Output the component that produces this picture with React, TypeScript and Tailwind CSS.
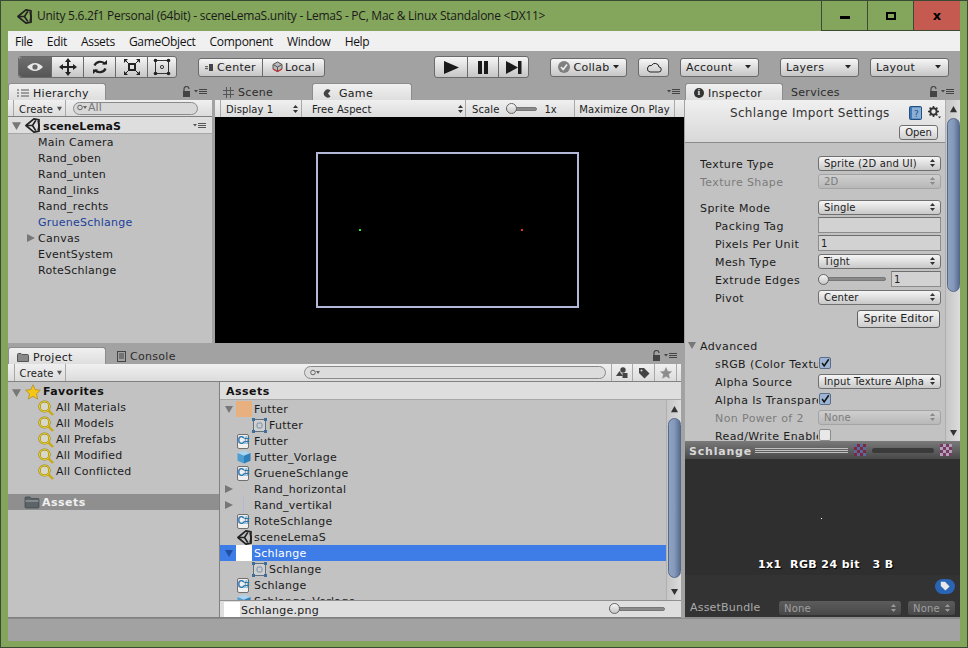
import type { ReactNode } from "react";

const hierarchyItems = ["Main Camera", "Rand_oben", "Rand_unten", "Rand_links", "Rand_rechts", "GrueneSchlange", "Canvas", "EventSystem", "RoteSchlange"];
const favorites = ["All Materials", "All Models", "All Prefabs", "All Modified", "All Conflicted"];

function UnityLogo({ size = 16, color = "#222" }: { size?: number; color?: string }) {
  return (
    <svg width={size} height={size} viewBox="0 0 16 16" className="shrink-0">
      <path d="M1 8 L9.5 1 L15 2 L14.6 6 L15 10 L15 14 L9.5 15 Z" fill="none" stroke={color} strokeWidth="1.8" strokeLinejoin="round" />
      <path d="M2 8 H8 M8 8 L11.5 2.5 M8 8 L11.5 13.5" stroke={color} strokeWidth="1.8" fill="none" />
      <path d="M14 3 L15.2 8 L14 13" stroke={color} strokeWidth="1.8" fill="none" />
    </svg>
  );
}

function Triangle({ dir = "down", color = "#777", size = 8 }: { dir?: "down" | "right" | "up"; color?: string; size?: number }) {
  const d = dir === "down" ? "M0 1 H8 L4 8 Z" : dir === "right" ? "M0 0 L8 4 L0 8 Z" : "M0 7 H8 L4 0 Z";
  return (
    <svg width={size} height={size} viewBox="0 0 8 8" className="shrink-0">
      <path d={d} fill={color} />
    </svg>
  );
}

function Lock() {
  return (
    <svg width="9" height="11" viewBox="0 0 9 11" className="shrink-0">
      <path d="M2 5 V3 a2.5 2.5 0 0 1 5 0" fill="none" stroke="#444" strokeWidth="1.2" />
      <rect x="1" y="5" width="7" height="6" fill="#444" />
    </svg>
  );
}

function PaneMenu({ light = false }: { light?: boolean }) {
  const c = light ? "#555" : "#444";
  return (
    <svg width="14" height="7" viewBox="0 0 14 7" className="shrink-0">
      <path d="M0 2 H4 L2 4.5 Z" fill={c} />
      <path d="M5 1.5 H13 M5 3.5 H13 M5 5.5 H13" stroke={c} strokeWidth="1" />
    </svg>
  );
}

function Updown({ color = "#333" }: { color?: string }) {
  return (
    <svg width="5" height="8" viewBox="0 0 5 8" className="shrink-0">
      <path d="M0 3 L2.5 0 L5 3 Z M0 5 H5 L2.5 8 Z" fill={color} />
    </svg>
  );
}

function Caret() {
  return (
    <svg width="6" height="4" viewBox="0 0 6 4" className="shrink-0">
      <path d="M0 0 H6 L3 3.5 Z" fill="#222" />
    </svg>
  );
}

function CsIcon() {
  return (
    <span className="ml-[1px] flex h-[15px] w-[12px] shrink-0 items-center justify-center rounded-[2px] border border-[#6f6f6f] bg-[#f0f0f0] font-['Liberation_Sans',sans-serif] text-[10px] font-bold leading-none tracking-[-1px] text-[#2a7ab0]">
      C#
    </span>
  );
}

function CubeIcon() {
  return (
    <svg width="14" height="14" viewBox="0 0 14 14" className="ml-[1px] shrink-0">
      <path d="M7 0.5 L13.5 3 L7 5.8 L0.5 3 Z" fill="#a8d4ee" />
      <path d="M0.5 3 L7 5.8 V13.5 L0.5 10.8 Z" fill="#4e9ed2" />
      <path d="M13.5 3 L7 5.8 V13.5 L13.5 10.8 Z" fill="#2f7fb8" />
    </svg>
  );
}

function SpriteIcon() {
  return (
    <svg width="15" height="15" viewBox="0 0 15 15" className="ml-[1px] shrink-0">
      <rect x="1.5" y="1.5" width="12" height="12" fill="#cfcfcf" stroke="#5f6f7f" />
      <rect x="5" y="5" width="5" height="5" rx="1.5" fill="none" stroke="#6c8ca8" />
      <rect x="0" y="0" width="3" height="3" fill="#3d6f9a" />
      <rect x="12" y="0" width="3" height="3" fill="#3d6f9a" />
      <rect x="0" y="12" width="3" height="3" fill="#3d6f9a" />
      <rect x="12" y="12" width="3" height="3" fill="#3d6f9a" />
    </svg>
  );
}

function SearchIcon() {
  return (
    <svg width="16" height="16" viewBox="0 0 16 16" className="shrink-0">
      <circle cx="6.5" cy="6.5" r="5" fill="#d8d8c8" stroke="#8a7a10" strokeWidth="2.2" />
      <circle cx="6.5" cy="6.5" r="5" fill="none" stroke="#f0d020" strokeWidth="1.1" />
      <path d="M10.5 10.5 L15 15" stroke="#c9a810" strokeWidth="2.4" />
    </svg>
  );
}

function Star({ color = "#f5c518", size = 16, stroke = "#a08010" }: { color?: string; size?: number; stroke?: string }) {
  return (
    <svg width={size} height={size} viewBox="0 0 16 16" className="shrink-0">
      <path d="M8 0.8 L10.2 5.6 L15.4 6.2 L11.5 9.7 L12.6 15 L8 12.3 L3.4 15 L4.5 9.7 L0.6 6.2 L5.8 5.6 Z" fill={color} stroke={stroke} strokeWidth="0.6" />
    </svg>
  );
}

function FolderIcon() {
  return (
    <svg width="16" height="13" viewBox="0 0 16 13" className="shrink-0">
      <path d="M1 2 Q1 1 2 1 H6 L7 2.5 H14 Q15 2.5 15 3.5 V11 Q15 12 14 12 H2 Q1 12 1 11 Z" fill="#5c6468" stroke="#3e4548" strokeWidth="0.7" />
      <path d="M1.5 5 H14.5" stroke="#aab0b2" strokeWidth="1" />
    </svg>
  );
}

function Checker({ c1, c2 }: { c1: string; c2: string }) {
  return (
    <svg width="12" height="12" viewBox="0 0 12 12" className="shrink-0">
      <rect width="12" height="12" fill={c1} />
      <path d="M0 0 H3 V3 H0 Z M6 0 H9 V3 H6 Z M3 3 H6 V6 H3 Z M9 3 H12 V6 H9 Z M0 6 H3 V9 H0 Z M6 6 H9 V9 H6 Z M3 9 H6 V12 H3 Z M9 9 H12 V12 H9 Z" fill={c2} />
    </svg>
  );
}

// nudges text down 1px inside a centred flex row, the hinted glyphs sit low in the original
function Low({ children }: { children: ReactNode }) {
  return <span className="whitespace-nowrap pt-[2px]">{children}</span>;
}

function Lower({ children }: { children: ReactNode }) {
  return <span className="whitespace-nowrap pt-[4px]">{children}</span>;
}

function ToolbarButton({ className = "", children }: { className?: string; children: ReactNode }) {
  return (
    <div className={`flex h-[19px] items-center rounded-[3px] border border-[#6a6a6a] bg-linear-to-b from-[#f6f6f6] to-[#c6c6c6] text-[11px] tracking-[0.3px] text-[#222] ${className}`}>
      {children}
    </div>
  );
}

function Segment({ w, active = false, children }: { w: string; active?: boolean; children: ReactNode }) {
  return (
    <div className={`flex h-full items-center justify-center border-l border-[#6a6a6a] first:border-l-0 ${w} ${active ? "rounded-l-[3px] bg-linear-to-b from-[#6e6e6e] to-[#565656]" : ""}`}>
      {children}
    </div>
  );
}

function Tab({ active = false, w, children }: { active?: boolean; w: string; children: ReactNode }) {
  return (
    <div className={`flex h-[17px] items-center gap-[4px] pt-[2px] text-[11px] tracking-[0.3px] ${w} ${active ? "rounded-t-[3px] border-x border-t border-[#8c8c8c] bg-linear-to-b from-[#f0f0f0] to-[#dedede] text-[#222]" : "text-[#2c2c2c]"}`}>
      {children}
    </div>
  );
}

function TreeRow({ indent = 0, selected = false, arrow, icon, label }: { indent?: number; selected?: boolean; arrow?: "down" | "right"; icon?: ReactNode; label: string }) {
  return (
    <div className={`flex h-[16px] shrink-0 items-center text-[11px] tracking-[0.25px] ${selected ? "bg-[#3e7de7] text-white" : "text-[#1c1c1c]"}`} style={{ paddingLeft: indent }}>
      <span className="flex w-[16px] shrink-0 items-center justify-center pl-[1px]">
        {arrow ? <Triangle dir={arrow} color={selected ? "#1f4f9f" : "#777"} /> : null}
      </span>
      <span className="flex w-[18px] shrink-0 items-center justify-start">{icon}</span>
      <Low>{label}</Low>
    </div>
  );
}

function Dropdown({ label, disabled = false }: { label: string; disabled?: boolean }) {
  return (
    <div className={`flex h-[15px] w-[123px] shrink-0 items-center justify-between rounded-[3px] border pl-[5px] pr-[5px] text-[10px] tracking-[0.15px] ${disabled ? "border-[#a4a4a4] bg-linear-to-b from-[#cfcfcf] to-[#b8b8b8] text-[#7c7c7c]" : "border-[#707070] bg-linear-to-b from-[#f6f6f6] to-[#c8c8c8] text-[#222]"}`}>
      <span className="whitespace-nowrap">{label}</span>
      <Updown color={disabled ? "#8a8a8a" : "#333"} />
    </div>
  );
}

function PropRow({ label, indent = false, disabled = false, children }: { label: string; indent?: boolean; disabled?: boolean; children: ReactNode }) {
  return (
    <div className="flex h-[18px] shrink-0 items-center pl-[15px] text-[11px] tracking-[0.4px]">
      <span className={`w-[118px] shrink-0 overflow-hidden whitespace-nowrap pt-[4px] ${indent ? "pl-[15px]" : ""} ${disabled ? "text-[#7c7c7c]" : "text-[#1c1c1c]"}`}>
        {label}
      </span>
      {children}
    </div>
  );
}

function TextField({ value = "", w = "w-[123px]" }: { value?: string; w?: string }) {
  return (
    <div className={`flex h-[16px] shrink-0 items-center border border-[#8c8c8c] border-t-[#6e6e6e] bg-[#d2d2d2] pl-[2px] text-[10px] tracking-[0.15px] text-[#222] ${w}`}>
      {value}
    </div>
  );
}

function Check({ checked = true }: { checked?: boolean }) {
  return (
    <div className={`ml-[1px] flex h-[12px] w-[12px] shrink-0 items-center justify-center rounded-[2px] border ${checked ? "border-[#5a6e8a] bg-[#9db4d4]" : "border-[#8a8a8a] bg-[#e8e8e8]"}`}>
      {checked ? (
        <svg width="12" height="12" viewBox="0 0 12 12">
          <path d="M2.5 6 L5 9.5 L10.5 1.5" fill="none" stroke="#111" strokeWidth="1.8" />
        </svg>
      ) : null}
    </div>
  );
}

function Slider({ w }: { w: string }) {
  return (
    <div className={`relative flex h-[11px] shrink-0 items-center ${w}`}>
      <div className="h-[4px] w-full rounded-full border border-[#777] bg-[#8a8a8a]" />
      <div className="absolute left-0 top-0 h-[11px] w-[11px] rounded-full border border-[#666] bg-linear-to-b from-[#f6f6f6] to-[#c6c6c6]" />
    </div>
  );
}

function Scrollbar({ thumb, spacer }: { thumb: string; spacer: string }) {
  return (
    <div className="flex w-[15px] shrink-0 flex-col items-center border-l border-[#b0b0b0] bg-linear-to-r from-[#c6c6c6] to-[#dcdcdc]">
      <div className="flex h-[18px] shrink-0 items-center justify-center">
        <Triangle dir="up" color="#333" size={7} />
      </div>
      <div className={`w-[13px] shrink-0 rounded-full border border-[#56688a] bg-linear-to-r from-[#8ea3c2] via-[#8499ba] to-[#5a6e92] ${thumb}`} />
      <div className={spacer} />
      <div className="flex h-[18px] shrink-0 items-center justify-center">
        <Triangle dir="down" color="#333" size={7} />
      </div>
    </div>
  );
}

export default function App() {
  return (
    <div className="flex h-[648px] w-[968px] flex-col overflow-hidden border border-[#3b4a33] bg-[#83a55c] font-['DejaVu_Sans',sans-serif]">
      <div className="flex h-[30px] shrink-0 items-start">
        <div className="flex h-full flex-1 items-center pl-[16px] font-['Open_Sans',sans-serif] text-[12px] tracking-[-0.25px] text-[#1a1a1a]">
          <UnityLogo size={15} />
          <span className="ml-[5px] whitespace-nowrap">Unity 5.6.2f1 Personal (64bit) - sceneLemaS.unity - LemaS - PC, Mac &amp; Linux Standalone &lt;DX11&gt;</span>
        </div>
        <div className="flex h-full w-[139px] shrink-0 border-b border-[#3b4a33]">
          <div className="flex w-[47px] items-center justify-center border-x border-[#3b4a33]">
            <div className="mt-[4px] h-[3px] w-[10px] bg-black" />
          </div>
          <div className="flex w-[46px] items-center justify-center border-r border-[#3b4a33]">
            <div className="h-[8px] w-[10px] border-2 border-black" />
          </div>
          <div className="flex w-[46px] items-center justify-center bg-[#c45a50] font-['DejaVu_Sans',sans-serif] text-[13px] font-bold text-black">x</div>
        </div>
        <div className="h-full w-[7px] shrink-0" />
      </div>
      <div className="mx-[7px] flex min-h-0 flex-1 flex-col">
        <div className="flex h-[20px] shrink-0 items-center gap-[14px] bg-[#f0f0f0] pl-[7px] font-['Open_Sans',sans-serif] text-[12px] tracking-[-0.3px] text-[#111]">
          <Low>File</Low>
          <Low>Edit</Low>
          <Low>Assets</Low>
          <Low>GameObject</Low>
          <Low>Component</Low>
          <Low>Window</Low>
          <Low>Help</Low>
        </div>
        <div className="flex h-[32px] shrink-0 items-center bg-[#a2a2a2] pl-[10px]">
          <div className="flex h-[22px] w-[159px] items-center rounded-[3px] border border-[#6a6a6a] bg-linear-to-b from-[#f6f6f6] to-[#c6c6c6]">
            <Segment w="w-[32px]" active>
              <svg width="18" height="12" viewBox="0 0 18 12"><path d="M1 6 Q9 -2 17 6 Q9 14 1 6 Z" fill="#e8e8e8" /><circle cx="9" cy="6" r="2.6" fill="#666" /></svg>
            </Segment>
            <Segment w="w-[32px]">
              <svg width="18" height="18" viewBox="0 0 18 18"><path d="M9 0 L12 4 H10 V8 H14 V6 L18 9 L14 12 V10 H10 V14 H12 L9 18 L6 14 H8 V10 H4 V12 L0 9 L4 6 V8 H8 V4 H6 Z" fill="#222" /></svg>
            </Segment>
            <Segment w="w-[32px]">
              <svg width="16" height="16" viewBox="0 0 16 16"><path d="M2.5 6.5 A6 5.5 0 0 1 13 5 M13.5 9.5 A6 5.5 0 0 1 3 11" fill="none" stroke="#222" strokeWidth="2.2" /><path d="M10 5.5 H15 V1 Z M6 10.5 H1 V15 Z" fill="#222" /></svg>
            </Segment>
            <Segment w="w-[32px]">
              <svg width="18" height="18" viewBox="0 0 18 18"><rect x="6" y="6" width="6" height="6" fill="none" stroke="#222" strokeWidth="2" /><path d="M1 5 V1 H5 Z M17 5 V1 H13 Z M1 13 V17 H5 Z M17 13 V17 H13 Z" fill="#222" /><path d="M2 2 L6 6 M16 2 L12 6 M2 16 L6 12 M16 16 L12 12" stroke="#222" /></svg>
            </Segment>
            <Segment w="flex-1">
              <svg width="18" height="18" viewBox="0 0 18 18"><rect x="2.5" y="2.5" width="13" height="13" fill="none" stroke="#333" /><circle cx="9" cy="9" r="1.6" fill="none" stroke="#333" /><circle cx="2.5" cy="2.5" r="1.8" fill="#222" /><circle cx="15.5" cy="2.5" r="1.8" fill="#222" /><circle cx="2.5" cy="15.5" r="1.8" fill="#222" /><circle cx="15.5" cy="15.5" r="1.8" fill="#222" /></svg>
            </Segment>
          </div>
          <ToolbarButton className="ml-[21px] w-[127px]">
            <div className="flex h-full w-[64px] items-center justify-center gap-[3px] border-r border-[#6a6a6a]">
              <svg width="9" height="7" viewBox="0 0 9 7"><rect y="2" width="3" height="1.2" fill="#666" /><rect y="4" width="3" height="1.2" fill="#666" /><rect x="4" width="4" height="7" fill="#444" /></svg>
              <Low>Center</Low>
            </div>
            <div className="flex h-full flex-1 items-center justify-center gap-[2px]">
              <svg width="11" height="12" viewBox="0 0 11 12"><path d="M5.5 1 L10 3.5 V8 L5.5 10.5 L1 8 V3.5 Z" fill="#bbb" stroke="#555" /><path d="M1 8 L5.5 10.5 L10 8" fill="none" stroke="#d03030" strokeWidth="1.2" /><path d="M1 3.5 L5.5 6 L10 3.5 M5.5 6 V10.5" fill="none" stroke="#555" /></svg>
              <Low>Local</Low>
            </div>
          </ToolbarButton>
          <div className="ml-[109px] flex h-[22px] w-[95px] items-center rounded-[3px] border border-[#6a6a6a] bg-linear-to-b from-[#f6f6f6] to-[#c6c6c6]">
            <Segment w="w-[32px]"><svg width="15" height="13" viewBox="0 0 15 13"><path d="M0 0 L15 6.5 L0 13 Z" fill="#1a1a1a" /></svg></Segment>
            <Segment w="w-[31px]"><svg width="10" height="13" viewBox="0 0 10 13"><rect width="4" height="13" fill="#1a1a1a" /><rect x="6" width="4" height="13" fill="#1a1a1a" /></svg></Segment>
            <Segment w="flex-1"><svg width="16" height="13" viewBox="0 0 16 13"><path d="M0 0 L12 6.5 L0 13 Z" fill="#1a1a1a" /><rect x="12" width="3.5" height="13" fill="#1a1a1a" /></svg></Segment>
          </div>
          <ToolbarButton className="ml-[21px] w-[77px] justify-center gap-[3px]">
            <svg width="12" height="12" viewBox="0 0 12 12"><circle cx="6" cy="6" r="6" fill="#808080" /><path d="M3 6 L5.2 8.5 L9 3.5" fill="none" stroke="#eee" strokeWidth="1.6" /></svg>
            <Low>Collab</Low>
            <Caret />
          </ToolbarButton>
          <ToolbarButton className="ml-[11px] w-[31px] justify-center">
            <svg width="16" height="11" viewBox="0 0 16 11"><path d="M4 10 H12.5 A2.5 2.5 0 0 0 13 5 A4 4 0 0 0 5.5 3.5 A3.2 3.2 0 0 0 4 10 Z" fill="none" stroke="#222" /></svg>
          </ToolbarButton>
          <ToolbarButton className="ml-[11px] w-[79px] justify-between px-[5px]">
            <Low>Account</Low>
            <span className="pr-[2px]"><Caret /></span>
          </ToolbarButton>
          <ToolbarButton className="ml-[21px] w-[79px] justify-between px-[5px]">
            <Low>Layers</Low>
            <span className="pr-[2px]"><Caret /></span>
          </ToolbarButton>
          <ToolbarButton className="ml-[11px] w-[79px] justify-between px-[5px]">
            <Low>Layout</Low>
            <span className="pr-[2px]"><Caret /></span>
          </ToolbarButton>
        </div>
        <div className="flex h-[535px] shrink-0 bg-[#a2a2a2]">
          <div className="flex w-[677px] shrink-0 flex-col">
            <div className="flex h-[262px] shrink-0">
              <div className="flex w-[204px] shrink-0 flex-col">
                <div className="flex h-[17px] shrink-0 items-center justify-between pr-[4px]">
                  <Tab active w="w-[98px] pl-[8px]">
                    <svg width="12" height="9" viewBox="0 0 12 9"><path d="M0 1 H2 M0 4 H2 M0 7 H2 M4 1 H12 M4 4 H12 M4 7 H12" stroke="#555" /></svg>
                    <Low>Hierarchy</Low>
                  </Tab>
                  <div className="flex items-center gap-[3px]"><Lock /><PaneMenu /></div>
                </div>
                <div className="flex h-[17px] shrink-0 items-center border-b border-[#808080] bg-linear-to-b from-[#f0f0f0] to-[#dcdcdc] text-[10px] tracking-[0.1px] text-[#222]">
                  <div className="ml-[5px] flex h-full w-[53px] items-center justify-center gap-[4px] border-x border-[#a8a8a8] pl-[2px]">
                    <Low>Create</Low>
                    <Triangle color="#555" size={5} />
                  </div>
                  <div className="ml-[7px] flex h-[13px] w-[125px] items-center gap-[1px] rounded-full border border-[#8a8a8a] bg-[#d8d8d8] pl-[3px] text-[11px] text-[#777]">
                    <svg width="10" height="8" viewBox="0 0 10 8"><circle cx="3" cy="3.5" r="2.3" fill="none" stroke="#666" /><path d="M6 2 H10 L8 5 Z" fill="#666" /></svg>
                    <span>All</span>
                  </div>
                </div>
                <div className="flex min-h-0 flex-1 flex-col bg-[#c2c2c2]">
                  <div className="flex h-[17px] shrink-0 items-center justify-between border-b border-[#a8a8a8] bg-[#dedede] pr-[5px] text-[11px] font-bold tracking-[0.1px] text-[#111]">
                    <div className="flex items-center">
                      <span className="flex pl-[4px]"><Triangle color="#777" size={9} /></span>
                      <span className="ml-[4px] mr-[3px]"><UnityLogo size={15} /></span>
                      <Lower>sceneLemaS</Lower>
                    </div>
                    <PaneMenu light />
                  </div>
                  <div className="flex flex-col">
                    {hierarchyItems.map((item) => (
                      <div key={item} className={`flex h-[16px] shrink-0 items-center pl-[19px] text-[11px] tracking-[0.25px] ${item === "GrueneSchlange" ? "text-[#1b3f9c]" : "text-[#1c1c1c]"}`}>
                        <span className="flex w-[11px] shrink-0">{item === "Canvas" ? <Triangle dir="right" /> : null}</span>
                        <Low>{item}</Low>
                      </div>
                    ))}
                  </div>
                </div>
                <div className="h-[2px] shrink-0" />
              </div>
              <div className="ml-[3px] flex w-[469px] shrink-0 flex-col">
                <div className="flex h-[17px] shrink-0 items-center justify-between">
                  <div className="flex items-center">
                    <Tab w="w-[97px] pl-[8px]">
                      <svg width="11" height="11" viewBox="0 0 11 11"><path d="M3.5 0 V11 M7.5 0 V11 M0 3.5 H11 M0 7.5 H11" stroke="#555" /></svg>
                      <Low>Scene</Low>
                    </Tab>
                    <Tab active w="w-[100px] pl-[10px]">
                      <svg width="9" height="9" viewBox="0 0 9 9"><path d="M7.5 1.5 A4 4 0 1 0 7.5 7.5 L5 4.5 Z" fill="#444" /></svg>
                      <span className="ml-[3px] whitespace-nowrap pt-[2px]">Game</span>
                    </Tab>
                  </div>
                  <span className="pr-[3px]"><PaneMenu /></span>
                </div>
                <div className="flex h-[17px] shrink-0 items-center overflow-hidden bg-linear-to-b from-[#f0f0f0] to-[#dcdcdc] text-[10px] tracking-[0.1px] text-[#222]">
                  <div className="flex h-full w-[5px] shrink-0" />
                  <div className="flex h-full w-[82px] shrink-0 items-center justify-between border-x border-[#a8a8a8] pl-[5px] pr-[3px]"><Low>Display 1</Low><Updown /></div>
                  <div className="flex h-full w-[164px] shrink-0 items-center justify-between border-r border-[#a8a8a8] pl-[10px] pr-[2px]"><Low>Free Aspect</Low><Updown /></div>
                  <div className="flex h-full w-[108px] shrink-0 items-center pl-[6px]">
                    <Low>Scale</Low>
                    <Slider w="w-[31px] ml-[7px]" />
                    <span className="ml-[7px] whitespace-nowrap pt-[2px]">1x</span>
                  </div>
                  <div className="flex h-full w-[101px] shrink-0 items-center justify-center border-x border-[#a8a8a8]"><Low>Maximize On Play</Low></div>
                </div>
                <div className="flex min-h-0 flex-1 items-center justify-center bg-black">
                  <div className="relative h-[156px] w-[263px] -translate-x-[2px] border-2 border-[#b4b8d8]">
                    <div className="absolute left-[41px] top-[75px] h-[2px] w-[2px] bg-[#35e035]" />
                    <div className="absolute left-[203px] top-[75px] h-[2px] w-[2px] bg-[#e03030]" />
                  </div>
                </div>
                <div className="h-[2px] shrink-0" />
              </div>
            </div>
            <div className="mt-[2px] flex w-[673px] min-h-0 flex-1 flex-col">
              <div className="flex h-[17px] shrink-0 items-center justify-between pr-[3px]">
                <div className="flex items-center">
                  <Tab active w="w-[98px] pl-[8px]">
                    <svg width="12" height="9" viewBox="0 0 12 9"><path d="M0.5 1.5 Q0.5 0.5 1.5 0.5 H4 L5 1.5 H10.5 Q11.5 1.5 11.5 2.5 V8.5 H0.5 Z" fill="#888" stroke="#555" /></svg>
                    <Low>Project</Low>
                  </Tab>
                  <Tab w="w-[100px] pl-[11px]">
                    <svg width="9" height="11" viewBox="0 0 9 11"><rect x="0.5" y="0.5" width="8" height="10" fill="none" stroke="#444" /><path d="M2 3 H7 M2 5 H7 M2 7 H7" stroke="#444" /></svg>
                    <Low>Console</Low>
                  </Tab>
                </div>
                <div className="flex items-center gap-[3px]"><Lock /><PaneMenu /></div>
              </div>
              <div className="flex h-[18px] shrink-0 items-center border-b border-[#808080] bg-linear-to-b from-[#f0f0f0] to-[#dcdcdc] text-[10px] tracking-[0.1px] text-[#222]">
                <div className="ml-[6px] flex h-full w-[52px] items-center justify-center gap-[4px] border-x border-[#a8a8a8] pl-[2px]">
                  <Low>Create</Low>
                  <Triangle color="#555" size={5} />
                </div>
                <div className="ml-[238px] flex h-[13px] w-[302px] items-center rounded-full border border-[#8a8a8a] bg-[#dcdcdc] pl-[5px]">
                  <svg width="10" height="8" viewBox="0 0 10 8"><circle cx="3" cy="3.5" r="2.3" fill="none" stroke="#666" /><path d="M6 2 H10 L8 5 Z" fill="#666" /></svg>
                </div>
                <div className="ml-[5px] flex h-full w-[22px] items-center justify-center border-x border-[#a8a8a8]">
                  <svg width="12" height="11" viewBox="0 0 12 11"><path d="M0 9 L3.5 4 L7 9 Z" fill="#444" /><circle cx="7" cy="3" r="2.7" fill="#444" /><rect x="6.5" y="6" width="5" height="5" fill="#444" /></svg>
                </div>
                <div className="flex h-full w-[22px] items-center justify-center border-r border-[#a8a8a8]">
                  <svg width="12" height="12" viewBox="0 0 12 12"><path d="M1 1 H6 L11.5 6.5 L6.5 11.5 L1 6 Z" fill="#444" /><circle cx="3.5" cy="3.5" r="1" fill="#ddd" /></svg>
                </div>
                <div className="flex h-full w-[22px] items-center justify-center border-r border-[#a8a8a8]">
                  <Star color="#8c8c8c" size={12} stroke="#8c8c8c" />
                </div>
              </div>
              <div className="flex min-h-0 flex-1 border-b border-[#808080]">
                <div className="flex w-[211px] shrink-0 flex-col bg-[#c2c2c2] pt-[2px]">
                  <div className="flex h-[16px] shrink-0 items-center text-[11px] font-bold tracking-[0.4px] text-[#111]">
                    <span className="flex pl-[4px]"><Triangle color="#777" size={9} /></span>
                    <span className="ml-[4px] mr-[2px]"><Star /></span>
                    <span>Favorites</span>
                  </div>
                  {favorites.map((item) => (
                    <div key={item} className="flex h-[16px] shrink-0 items-center pl-[30px] text-[11px] tracking-[0.2px] text-[#1c1c1c]">
                      <SearchIcon />
                      <span className="ml-[2px]">{item}</span>
                    </div>
                  ))}
                  <div className="mt-[14px] flex h-[16px] shrink-0 items-center bg-[#8f8f8f] pl-[16px] text-[11px] font-bold tracking-[0.5px] text-[#f0f0f0]">
                    <FolderIcon />
                    <span className="ml-[2px] pt-[2px]">Assets</span>
                  </div>
                </div>
                <div className="flex min-w-0 flex-1 flex-col border-l border-[#808080]">
                  <div className="flex h-[18px] shrink-0 items-center border-b border-[#a8a8a8] bg-[#dedede] pl-[6px] text-[11px] font-bold tracking-[0.5px] text-[#111]"><Lower>Assets</Lower></div>
                  <div className="flex min-h-0 flex-1 bg-[#c2c2c2]">
                    <div className="flex min-w-0 flex-1 flex-col overflow-hidden pt-[1px]">
                      <TreeRow arrow="down" icon={<span className="h-[16px] w-[16px] bg-[#e8b07f]" />} label="Futter" />
                      <TreeRow indent={15} icon={<SpriteIcon />} label="Futter" />
                      <TreeRow icon={<CsIcon />} label="Futter" />
                      <TreeRow icon={<CubeIcon />} label="Futter_Vorlage" />
                      <TreeRow icon={<CsIcon />} label="GrueneSchlange" />
                      <TreeRow arrow="right" label="Rand_horizontal" />
                      <TreeRow arrow="right" icon={<span className="ml-[7px] h-[16px] w-[1px] bg-[#b4b8d8]" />} label="Rand_vertikal" />
                      <TreeRow icon={<CsIcon />} label="RoteSchlange" />
                      <TreeRow icon={<span className="ml-[1px] flex"><UnityLogo size={15} /></span>} label="sceneLemaS" />
                      <TreeRow selected arrow="down" icon={<span className="h-[16px] w-[16px] bg-white" />} label="Schlange" />
                      <TreeRow indent={15} icon={<SpriteIcon />} label="Schlange" />
                      <TreeRow icon={<CsIcon />} label="Schlange" />
                      <TreeRow icon={<CubeIcon />} label="Schlange_Vorlage" />
                    </div>
                    <Scrollbar thumb="h-[160px]" spacer="h-[5px]" />
                  </div>
                  <div className="flex h-[17px] shrink-0 items-start overflow-hidden border-t border-[#909090] bg-[#dedede] pl-[4px] text-[11px] tracking-[0.25px] text-[#1c1c1c]">
                    <span className="mt-[1px] h-[15px] w-[16px] shrink-0 bg-white" />
                    <span className="ml-[1px] whitespace-nowrap leading-[19px]">Schlange.png</span>
                    <div className="ml-auto mr-[16px] mt-[2px]"><Slider w="w-[56px]" /></div>
                  </div>
                </div>
              </div>
            </div>
          </div>
          <div className="flex w-[275px] shrink-0 flex-col">
            <div className="flex h-[17px] shrink-0 items-center justify-between pr-[5px]">
              <div className="flex items-center">
                <Tab active w="w-[98px] pl-[8px]">
                  <span className="flex h-[10px] w-[10px] items-center justify-center rounded-full bg-[#333] font-['Liberation_Serif',serif] text-[8px] font-bold leading-none text-white">i</span>
                  <Low>Inspector</Low>
                </Tab>
                <Tab w="ml-[8px] w-[60px]"><Low>Services</Low></Tab>
              </div>
              <div className="flex items-center gap-[3px]"><Lock /><PaneMenu /></div>
            </div>
            <div className="flex h-[341px] shrink-0">
              <div className="flex min-w-0 flex-1 flex-col overflow-hidden bg-[#c2c2c2]">
                <div className="relative flex h-[43px] shrink-0 flex-col border-b border-[#8a8a8a] bg-linear-to-b from-[#f0f0f0] to-[#d8d8d8]">
                  <div className="flex h-[25px] shrink-0 items-center pl-[45px] pr-[4px] text-[12px] tracking-[0.33px] text-[#333]">
                    <span className="whitespace-nowrap">Schlange Import Settings</span>
                    <span className="ml-auto flex items-center gap-[6px]">
                      <svg width="13" height="14" viewBox="0 0 13 14"><rect x="0.5" y="0.5" width="12" height="13" rx="1" fill="#3f78b8" stroke="#24507f" /><rect x="3" y="1.5" width="9" height="11" fill="#8ab0d8" /><text x="7.5" y="11" fontSize="9" textAnchor="middle" fill="#24507f">?</text></svg>
                      <svg width="13" height="13" viewBox="0 0 13 13"><circle cx="5.5" cy="5.5" r="3.2" fill="none" stroke="#333" strokeWidth="2" /><path d="M5.5 0 V2 M5.5 9 V11 M0 5.5 H2 M9 5.5 H11 M1.6 1.6 L3 3 M8 8 L9.4 9.4 M9.4 1.6 L8 3 M3 8 L1.6 9.4" stroke="#333" strokeWidth="1.6" /><path d="M10 10.5 H13 L11.5 12.5 Z" fill="#333" /></svg>
                    </span>
                  </div>
                  <div className="flex justify-end pr-[7px]">
                    <div className="flex h-[15px] w-[39px] items-center justify-center rounded-[3px] border border-[#707070] bg-linear-to-b from-[#f6f6f6] to-[#d0d0d0] text-[10px] text-[#222]">Open</div>
                  </div>
                </div>
                <div className="flex flex-col pt-[11px]">
                  <PropRow label="Texture Type"><Dropdown label="Sprite (2D and UI)" /></PropRow>
                  <PropRow label="Texture Shape" disabled><Dropdown label="2D" disabled /></PropRow>
                  <div className="h-[8px] shrink-0" />
                  <PropRow label="Sprite Mode"><Dropdown label="Single" /></PropRow>
                  <PropRow label="Packing Tag" indent><TextField /></PropRow>
                  <PropRow label="Pixels Per Unit" indent><TextField value="1" /></PropRow>
                  <PropRow label="Mesh Type" indent><Dropdown label="Tight" /></PropRow>
                  <PropRow label="Extrude Edges" indent>
                    <Slider w="w-[68px]" />
                    <span className="ml-[5px]"><TextField value="1" w="w-[50px]" /></span>
                  </PropRow>
                  <PropRow label="Pivot" indent><Dropdown label="Center" /></PropRow>
                  <div className="flex h-[22px] shrink-0 items-center justify-end pr-[5px] pt-[4px]">
                    <div className="flex h-[18px] w-[83px] items-center justify-center rounded-[3px] border border-[#606060] bg-linear-to-b from-[#f6f6f6] to-[#cccccc] text-[11px] tracking-[0.1px] text-[#222]">Sprite Editor</div>
                  </div>
                  <div className="h-[8px] shrink-0" />
                  <div className="flex h-[18px] shrink-0 items-center pl-[3px] text-[11px] tracking-[0.4px] text-[#1c1c1c]">
                    <Triangle color="#777" />
                    <span className="ml-[4px] pt-[4px]">Advanced</span>
                  </div>
                  <PropRow label="sRGB (Color Texture)" indent><Check /></PropRow>
                  <PropRow label="Alpha Source" indent><Dropdown label="Input Texture Alpha" /></PropRow>
                  <PropRow label="Alpha Is Transparency" indent><Check /></PropRow>
                  <PropRow label="Non Power of 2" indent disabled><Dropdown label="None" disabled /></PropRow>
                  <PropRow label="Read/Write Enabled" indent><Check checked={false} /></PropRow>
                </div>
              </div>
              <div className="flex"><Scrollbar thumb="h-[174px]" spacer="flex-1" /></div>
            </div>
            <div className="flex min-h-0 flex-1 flex-col border-b border-[#8a8a8a] bg-[#333]">
              <div className="flex h-[18px] shrink-0 items-center bg-linear-to-b from-[#7a7a7a] to-[#484848] pl-[4px] pr-[8px] text-[11px] font-bold tracking-[0.8px] text-[#d8d8d8]">
                <Lower>Schlange</Lower>
                <div className="ml-[3px] flex h-[5px] w-[95px] flex-col justify-between border-y border-[#c0c0c0]"><div className="mt-[1px] h-[1px] bg-[#c0c0c0]" /></div>
                <span className="ml-[6px]"><Checker c1="#7a2a3a" c2="#5a6aa0" /></span>
                <div className="ml-[6px] h-[5px] w-[64px] rounded-full bg-[#3a3a3a]" />
                <span className="ml-[6px]"><Checker c1="#b0a0c0" c2="#7a3a5a" /></span>
              </div>
              <div className="relative flex h-[116px] shrink-0 flex-col items-center bg-[#2f2f2f]">
                <div className="absolute left-[136px] top-[59px] h-[1px] w-[1px] bg-white" />
                <span className="absolute bottom-[2px] left-[73px] whitespace-pre text-[11px] font-bold tracking-[0.4px] text-white [text-shadow:1px_1px_1px_#000]">1x1  RGB 24 bit   3 B</span>
              </div>
              <div className="flex flex-1 flex-col">
                <div className="flex h-[22px] shrink-0 items-center justify-end pr-[5px]">
                  <div className="flex h-[15px] w-[20px] items-center justify-center rounded-full bg-[#2a64b5]">
                    <svg width="10" height="10" viewBox="0 0 12 12"><path d="M1 1 H6 L11.5 6.5 L6.5 11.5 L1 6 Z" fill="#e8e8e8" /></svg>
                  </div>
                </div>
                <div className="mt-[3px] flex h-[16px] shrink-0 items-center pl-[5px] pr-[5px] text-[11px] tracking-[0.2px] text-[#aaa]">
                  <span className="w-[89px]">AssetBundle</span>
                  <div className="flex h-[14px] w-[122px] items-center justify-between rounded-[3px] bg-linear-to-b from-[#5c5c5c] to-[#484848] px-[5px] text-[10px] text-[#a0a0a0]"><span>None</span><Updown color="#999" /></div>
                  <div className="ml-auto flex h-[14px] w-[47px] items-center justify-between rounded-[3px] bg-linear-to-b from-[#5c5c5c] to-[#484848] px-[5px] text-[10px] text-[#a0a0a0]"><span>None</span><Updown color="#999" /></div>
                </div>
              </div>
            </div>
          </div>
        </div>
        <div className="h-[23px] shrink-0 border-t border-[#8a8a8a] bg-[#a2a2a2]" />
      </div>
      <div className="h-[6px] shrink-0" />
    </div>
  );
}
